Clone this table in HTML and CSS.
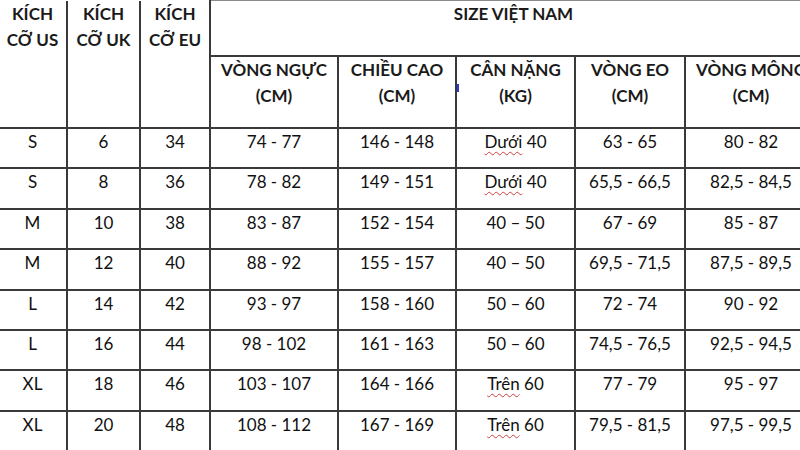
FILE: index.html
```html
<!DOCTYPE html>
<html lang="vi">
<head>
<meta charset="utf-8">
<title>Bảng size</title>
<link rel="stylesheet" href="styles.css">
</head>
<body>
<table class="size-table">
  <colgroup>
    <col class="c1"><col class="c2"><col class="c3"><col class="c4"><col class="c5"><col class="c6"><col class="c7"><col class="c8">
  </colgroup>
  <thead>
    <tr class="h1">
      <th rowspan="2" class="first">KÍCH<br>CỠ US</th>
      <th rowspan="2">KÍCH<br>CỠ UK</th>
      <th rowspan="2">KÍCH<br>CỠ EU</th>
      <th colspan="5" class="vn">SIZE VIỆT NAM</th>
    </tr>
    <tr class="h2">
      <th>VÒNG NGỰC<br>(CM)</th>
      <th>CHIỀU CAO<br>(CM)</th>
      <th class="kg"><span class="caret"></span>CÂN NẶNG<br>(KG)</th>
      <th>VÒNG EO<br>(CM)</th>
      <th>VÒNG MÔNG<br>(CM)</th>
    </tr>
  </thead>
  <tbody>
    <tr class="r40"><td class="first">S</td><td>6</td><td>34</td><td>74 - 77</td><td>146 - 148</td><td><span class="sp">Dưới</span> 40</td><td>63 - 65</td><td>80 - 82</td></tr>
    <tr class="r41"><td class="first">S</td><td>8</td><td>36</td><td>78 - 82</td><td>149 - 151</td><td><span class="sp">Dưới</span> 40</td><td>65,5 - 66,5</td><td>82,5 - 84,5</td></tr>
    <tr class="r40"><td class="first">M</td><td>10</td><td>38</td><td>83 - 87</td><td>152 - 154</td><td>40 – 50</td><td>67 - 69</td><td>85 - 87</td></tr>
    <tr class="r41"><td class="first">M</td><td>12</td><td>40</td><td>88 - 92</td><td>155 - 157</td><td>40 – 50</td><td>69,5 - 71,5</td><td>87,5 - 89,5</td></tr>
    <tr class="r40"><td class="first">L</td><td>14</td><td>42</td><td>93 - 97</td><td>158 - 160</td><td>50 – 60</td><td>72 - 74</td><td>90 - 92</td></tr>
    <tr class="r40"><td class="first">L</td><td>16</td><td>44</td><td>98 - 102</td><td>161 - 163</td><td>50 – 60</td><td>74,5 - 76,5</td><td>92,5 - 94,5</td></tr>
    <tr class="r41"><td class="first">XL</td><td>18</td><td>46</td><td>103 - 107</td><td>164 - 166</td><td><span class="sp">Trên</span> 60</td><td>77 - 79</td><td>95 - 97</td></tr>
    <tr class="r40"><td class="first">XL</td><td>20</td><td>48</td><td>108 - 112</td><td>167 - 169</td><td><span class="sp">Trên</span> 60</td><td>79,5 - 81,5</td><td>97,5 - 99,5</td></tr>
  </tbody>
</table>
</body>
</html>
```
FILE: styles.css
```css
html, body {
  margin: 0;
  padding: 0;
  background: #ffffff;
  overflow: hidden;
  width: 800px;
  height: 450px;
}

.size-table {
  table-layout: fixed;
  border-collapse: collapse;
  width: 818px;
  margin: 0 0 0 -1px;
  font-family: Lato, "Open Sans", "Liberation Sans", sans-serif;
  font-size: 17px;
  line-height: 26px;
  color: #111111;
}

.c1 { width: 68px; }
.c2 { width: 73px; }
.c3 { width: 70px; }
.c4 { width: 128px; }
.c5 { width: 118px; }
.c6 { width: 119px; }
.c7 { width: 110px; }
.c8 { width: 132px; }

.size-table th,
.size-table td {
  border: 2px solid #3a3a3a;
  padding: 0;
  text-align: center;
  vertical-align: top;
  white-space: nowrap;
  overflow: hidden;
}

.size-table th {
  font-weight: 700;
  color: #1a1a1a;
}

.size-table td {
  font-weight: 400;
}

.size-table .first {
  border-left: none;
}

.h1 th {
  border-top: none;
  height: 54px;
}

.h1 th.vn {
  border-top: 1px solid #8a8a8a;
  border-bottom: 1px solid #555;
}

.h2 th {
  height: 70px;
}

.r40 td { height: 38px; }
.r41 td { height: 39px; }

.kg {
  position: relative;
}

.caret {
  position: absolute;
  left: 0;
  top: 27px;
  width: 2px;
  height: 8px;
  background: #2a3ad0;
}

.sp {
  text-decoration: underline wavy #d04040;
  text-decoration-thickness: 1px;
  text-underline-offset: 3px;
}
```
